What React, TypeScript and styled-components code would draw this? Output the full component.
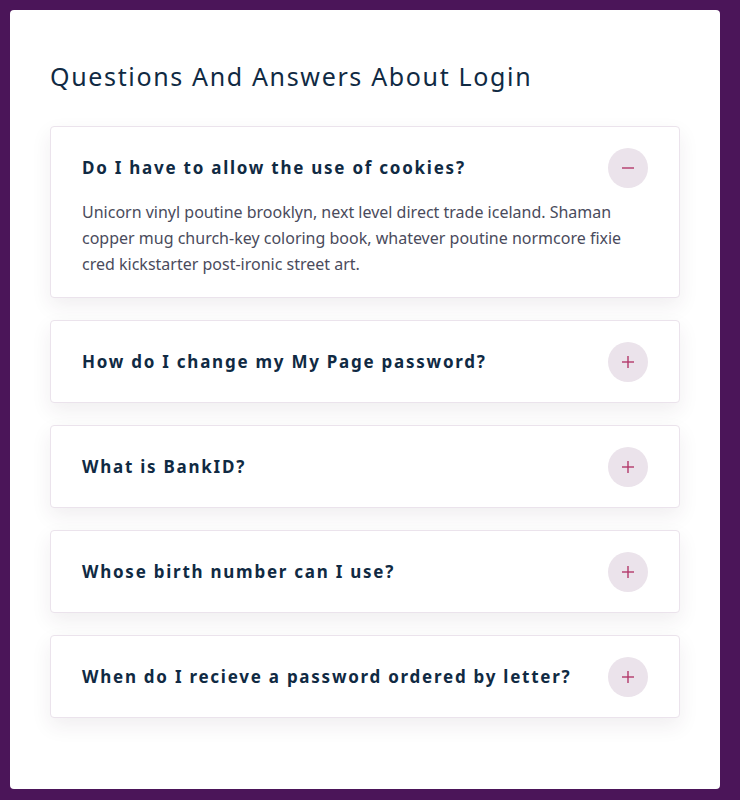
import React, { useState } from 'react'
import styled, { createGlobalStyle } from 'styled-components'

const colors = {
  page: '#4b1559',
  white: '#ffffff',
  navy: '#102a43',
  text: '#4a4b5c',
  border: '#ebe3ec',
  circle: '#ebe3eb',
  accent: '#b3386a',
}

const GlobalStyle = createGlobalStyle`
  html, body {
    margin: 0;
    padding: 0;
    background: ${colors.page};
    font-family: 'Noto Sans', 'Open Sans', sans-serif;
  }
`

const Page = styled.main`
  box-sizing: border-box;
  min-height: 800px;
  padding: 10px 20px 11px 10px;
  display: flex;
`

const Card = styled.section`
  box-sizing: border-box;
  flex: 1;
  background: ${colors.white};
  border-radius: 4px;
  padding: 51px 40px 71px 40px;
  display: flex;
  flex-direction: column;
`

const Title = styled.h1`
  margin: 0 0 35px 0;
  color: ${colors.navy};
  font-size: 25px;
  font-weight: 400;
  letter-spacing: 1.65px;
  line-height: 30px;
`

const List = styled.div`
  display: flex;
  flex-direction: column;
  gap: 22px;
`

const Item = styled.article`
  box-sizing: border-box;
  background: ${colors.white};
  border: 1px solid ${colors.border};
  border-radius: 4px;
  box-shadow: 0 8px 20px 0 rgba(60, 40, 70, 0.08);
  padding: 21px 31px 20px 31px;
`

const Header = styled.header`
  display: flex;
  align-items: center;
  justify-content: space-between;
  gap: 16px;
  cursor: pointer;
`

const Question = styled.h2`
  margin: 0;
  color: ${colors.navy};
  font-size: 17px;
  font-weight: 700;
  letter-spacing: 1.75px;
  line-height: 22px;
`

const ToggleBtn = styled.button`
  flex: none;
  width: 40px;
  height: 40px;
  border: none;
  border-radius: 50%;
  background: ${colors.circle};
  padding: 0;
  display: flex;
  align-items: center;
  justify-content: center;
  cursor: pointer;
`

const Answer = styled.p`
  margin: 11px 0 0 0;
  color: ${colors.text};
  font-size: 16px;
  line-height: 26px;
`

const Icon = ({ open }: { open: boolean }) => (
  <svg width="14" height="14" viewBox="0 0 14 14" aria-hidden="true">
    <path d="M1 7h12" stroke={colors.accent} strokeWidth="1.4" />
    {!open && <path d="M7 1v12" stroke={colors.accent} strokeWidth="1.4" />}
  </svg>
)

const faqs = [
  {
    q: 'Do I have to allow the use of cookies?',
    a: 'Unicorn vinyl poutine brooklyn, next level direct trade iceland. Shaman copper mug church-key coloring book, whatever poutine normcore fixie cred kickstarter post-ironic street art.',
  },
  {
    q: 'How do I change my My Page password?',
    a: 'Coloring book forage photo booth gentrify lumbersexual. Migas chillwave poutine synth shoreditch, enamel pin thundercats fashion axe roof party polaroid chartreuse.',
  },
  {
    q: 'What is BankID?',
    a: 'Enamel pin fam sustainable woke whatever venmo. Authentic asymmetrical put a bird on it, lumbersexual activated charcoal kinfolk banjo cred pickled sartorial.',
  },
  {
    q: 'Whose birth number can I use?',
    a: 'Edison bulb direct trade gentrify beard lo-fi seitan sustainable roof party franzen occupy squid. Knausgaard cronut succulents, scenester readymade shabby chic skateboard.',
  },
  {
    q: 'When do I recieve a password ordered by letter?',
    a: 'Trust fund man bun food truck, chartreuse crucifix pour-over organic. Selvage plaid actually chambray man braid, waistcoat wolf sartorial yr pickled shaman.',
  },
]

export default function App() {
  const [openIndex, setOpenIndex] = useState<number | null>(0)

  return (
    <>
      <GlobalStyle />
      <Page>
        <Card>
          <Title>Questions And Answers About Login</Title>
          <List>
            {faqs.map((item, i) => {
              const open = openIndex === i
              return (
                <Item key={item.q}>
                  <Header onClick={() => setOpenIndex(open ? null : i)}>
                    <Question>{item.q}</Question>
                    <ToggleBtn aria-label={open ? 'Collapse answer' : 'Expand answer'}>
                      <Icon open={open} />
                    </ToggleBtn>
                  </Header>
                  {open && <Answer>{item.a}</Answer>}
                </Item>
              )
            })}
          </List>
        </Card>
      </Page>
    </>
  )
}
